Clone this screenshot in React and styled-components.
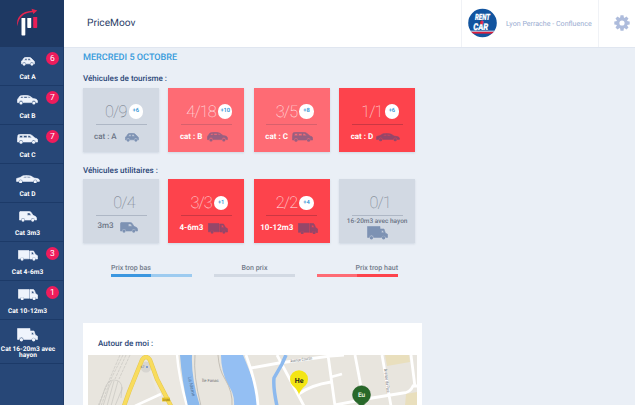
import React from "react";
import styled, { createGlobalStyle } from "styled-components";

const Global = createGlobalStyle`
  *{box-sizing:border-box}
  html,body{margin:0;padding:0;overflow:hidden}
  body{font-family:Roboto,"Liberation Sans",sans-serif;color:#2b4778;background:#eaeff7;text-rendering:geometricPrecision}
`;

const Page = styled.div`
  display:grid;grid-template-columns:64px 1fr;width:635px;height:405px;overflow:hidden;
  background:#eaeff6;
`;
const Sidebar = styled.nav`
  background:#274777;color:#fff;height:405px;box-shadow:inset -1px 0 0 #203c68;
`;
const Logo = styled.div`
  height:47px;background:#1e3963;
  svg{display:block}
`;
const NavItem = styled.div`
  position:relative;
  height:${p => (p.$tall ? 44 : 39)}px;border-bottom:1px solid #1c3a68;
`;
const NavIcon = styled.div`
  height:${p => (p.$tall ? 21.5 : 19)}px;display:flex;align-items:flex-end;justify-content:center;
  padding-right:9px;
`;
const NavLabel = styled.div`
  font-size:6.6px;line-height:7px;font-weight:700;text-align:center;
  padding-right:9px;margin-top:8px;
  ${p => p.$tall && "margin-top:4px;line-height:6.5px;padding-right:8px;white-space:pre;"}
`;
const NavBadge = styled.span`
  position:absolute;top:5px;right:5px;width:13px;height:13px;border-radius:50%;
  background:#ee1c5c;color:#fff;font-size:8.5px;line-height:14px;text-align:center;
`;

const Content = styled.div`min-width:0;`;
const Header = styled.header`
  height:48px;background:#fff;display:flex;align-items:stretch;border-bottom:1px solid #e0e6f0;
`;
const Brand = styled.div`flex:1;padding-left:23px;font-size:10.2px;line-height:48px;color:#2c4068;`;
const Agency = styled.div`
  width:138px;border-left:1px solid #f0f2f6;border-right:1px solid #f0f2f6;
  display:flex;align-items:center;padding:0 0 1px 6px;gap:9px;
  font-size:7.1px;color:#98abd0;white-space:nowrap;
`;
const AgencyName = styled.span`padding-top:1px;`;
const Settings = styled.div`width:36px;padding:15px 0 0 15px;svg{display:block}`;

const Main = styled.main`padding-left:19px;`;
const DateTitle = styled.h1`margin:0;padding-top:4px;font-size:9.1px;line-height:12px;font-weight:500;color:#369bdc;white-space:nowrap;`;
const Heading = styled.h2`margin:0;font-size:8.05px;line-height:10px;font-weight:500;color:#2b4778;height:${p => p.$h}px;padding-top:${p => p.$top}px;`;
const Cards = styled.div`display:grid;grid-template-columns:repeat(4,76px);column-gap:9.4px;`;

const tones = {
  neutral: { bg: "#d2d9e3", fg: "#6a7383", num: "#6f7783", line: "#aeb7c5", icon: "#7d92b3" },
  high: { bg: "#fe6b74", fg: "#fff", num: "#fff0f1", line: "#d8606c", icon: "#995f80" },
  top: { bg: "#fd434c", fg: "#fff", num: "#ffe9ea", line: "#cb3743", icon: "#954769" },
};
const CardBox = styled.article`
  height:64px;background:${p => p.$tone.bg};color:${p => p.$tone.fg};
  box-shadow:0 1px 2px rgba(90,110,140,.18);padding-top:15px;
`;
const Score = styled.div`
  height:17px;display:flex;justify-content:center;align-items:flex-start;padding-left:6px;gap:2px;
  color:${p => p.$tone.num};font-size:16.3px;line-height:17px;font-weight:100;letter-spacing:-.85px;
`;
const Extra = styled.span`
  width:14.5px;height:14.5px;margin-top:1.5px;border-radius:50%;background:#fff;color:#2b91d4;
  font-size:5.8px;line-height:14.5px;font-weight:500;letter-spacing:-.1px;text-align:center;
`;
const Rule = styled.div`height:1px;width:51px;margin:4px auto 0;background:${p => p.$tone.line};`;
const Caption = styled.div`
  display:flex;align-items:flex-end;padding-left:${p => p.$start}px;gap:${p => p.$gap}px;
  height:${p => p.$h || 17}px;white-space:nowrap;
  font-size:8px;font-weight:${p => (p.$bold ? 700 : 500)};line-height:10px;
`;
const CaptionText = styled.span`padding-bottom:${p => p.$lift}px;`;
const LongCaption = styled.div`
  display:flex;flex-direction:column;align-items:center;padding-top:1px;
  font-size:6.5px;line-height:9px;font-weight:500;white-space:nowrap;
`;

const Legend = styled.div`display:flex;padding:19.5px 0 0 28px;gap:22px;height:80px;`;
const LegendItem = styled.div`
  width:81px;font-size:7.05px;line-height:9px;font-weight:500;color:#737c8b;
  text-align:${p => p.$align};
`;
const Scale = styled.div`height:3px;margin-top:2px;background:linear-gradient(90deg,${p => p.$a} 50%,${p => p.$b} 50%);`;
const MapPanel = styled.section`width:339px;height:82px;background:#fff;padding:0 5px;`;
const MapTitle = styled.h2`margin:0;padding:14.5px 0 0 10px;height:31.5px;font-size:8.1px;line-height:10px;font-weight:500;`;

const vehicles = {
  A: { w: 14, h: 9, d: "M1 4L3 1Q4 .3 5 .3H8Q9 .3 10 1L12 3Q13.8 3.5 13.7 6.8H12.6A1.7 1.7 0 0 0 9.2 6.8H4.8A1.7 1.7 0 0 0 1.4 6.8H.3L.5 4ZM3.2 3.2H6V1.5H4.6ZM6.9 3.2H9.8L8.6 1.5H6.9Z", wheels: [3.1, 10.9], y: 7.3, r: 1.35 },
  B: { w: 21, h: 10, d: "M.8 4L3 1Q5 .3 8 .3Q11 .3 13 1.3L16 3.5Q20.5 3.8 20.5 6V7.6H18.8A2 2 0 0 0 14.8 7.6H6A2 2 0 0 0 2 7.6H.4V5ZM3.1 3.1H6V1.5H4.6ZM6.8 3.1H10.3V1.4H6.8ZM11.2 3.1H13.7L12 1.6H11.2Z", wheels: [4, 16.8], y: 8, r: 1.55 },
  C: { w: 21, h: 10, d: "M1 1Q2 .3 4 .3H11Q13.5 .3 15 1.4L18 4Q20.7 4.7 20.7 6V8H18.6A2 2 0 0 0 14.6 8H6A2 2 0 0 0 2 8H.4V5ZM2.3 3.7H5.6V1.6H2.7ZM6.5 3.7H10V1.6H6.5ZM10.9 3.7H14.7L13 1.8 10.9 1.6Z", wheels: [4, 16.6], y: 8.2, r: 1.55 },
  D: { w: 24, h: 8.5, d: "M.6 3.5L4 2.6 7 .8Q12 -.1 15 1.1L18 3Q23.4 3.5 23.4 5V6.4H21.2A2 2 0 0 0 17.2 6.4H6.6A2 2 0 0 0 2.6 6.4H.5ZM6.9 2.7H10.5V1.4Q8.2 1.4 6.9 2.7ZM11.4 2.7H15.1L13.6 1.7 11.4 1.4Z", wheels: [4.6, 19.2], y: 6.7, r: 1.6 },
  van: { w: 18, h: 11, d: "M1 .5H10Q11.3 .5 12 1.2L14 4.3Q17.6 5.5 17.6 7V9H15.7A2 2 0 0 0 11.7 9H6A2 2 0 0 0 2 9H.4V1.2ZM8.3 4.2H12.3L10.7 1.9H8.3Z", wheels: [4, 13.7], y: 9.1, r: 1.55 },
  truckS: { w: 20, h: 11, d: "M.3 .5H11V8.8H6A2 2 0 0 0 2.2 8.8H.3ZM11.8 1H15.5L17.3 4.3 19.6 5.8V9H17.8A2 2 0 0 0 14 9H11.8ZM13.4 4.4H16.1L14.8 2.1H13.4Z", wheels: [4.1, 15.9], y: 9.1, r: 1.55 },
  truckM: { w: 20, h: 11.5, d: "M.3 .5H11.1V9.3H6.1A2 2 0 0 0 2.3 9.3H.3ZM11.9 .5H15.5Q16.5 .8 17.5 4.5L19.7 6V9.5H18A2 2 0 0 0 14.2 9.5H11.9ZM13.7 4.5H16.4L15 2.1H13.7Z", wheels: [4.2, 16.1], y: 9.6, r: 1.55 },
  truckL: { w: 21, h: 14, d: "M.5 .5H13V3H17L18.3 7 20.6 8.3V11.4H18.8A2.2 2.2 0 0 0 14.5 11.4H6.6A2.2 2.2 0 0 0 2.2 11.4H.5ZM14.6 6.7H16.9L16.1 4.6H14.6Z", wheels: [4.4, 16.6], y: 11.7, r: 1.7 },
};
function Vehicle({ kind, color = "#eff4fc" }) {
  const v = vehicles[kind];
  return (
    <svg width={v.w} height={v.h} viewBox={`0 0 ${v.w} ${v.h}`} fill={color}>
      <path fillRule="evenodd" d={v.d} stroke={color} strokeWidth=".6" />
      {v.wheels.map(x => <circle key={x} cx={x} cy={v.y} r={v.r} />)}
    </svg>
  );
}

const nav = [
  { label: "Cat A", kind: "A", count: 6 },
  { label: "Cat B", kind: "B", count: 7 },
  { label: "Cat C", kind: "C", count: 7 },
  { label: "Cat D", kind: "D" },
  { label: "Cat 3m3", kind: "van" },
  { label: "Cat 4-6m3", kind: "truckS", count: 3 },
  { label: "Cat 10-12m3", kind: "truckM", count: 1 },
  { label: "Cat 16-20m3 avec\nhayon", kind: "truckL", tall: true },
];
const tourism = [
  { score: "0/9", extra: "+6", tone: "neutral", label: "cat : A", kind: "A", start: 11, gap: 8 },
  { score: "4/18", extra: "+10", tone: "high", label: "cat : B", kind: "B", start: 11.5, gap: 5 },
  { score: "3/5", extra: "+8", tone: "high", label: "cat : C", kind: "C", start: 11.5, gap: 4 },
  { score: "1/1", extra: "+6", tone: "top", label: "cat : D", kind: "D", start: 11.5, gap: 3 },
];
const utility = [
  { score: "0/4", tone: "neutral", label: "3m3", kind: "van", start: 14.5, gap: 6.5, lift: 2, h: 17 },
  { score: "3/3", extra: "+1", tone: "top", label: "4-6m3", kind: "truckS", start: 11, gap: 5, lift: 1, h: 18 },
  { score: "2/2", extra: "+4", tone: "top", label: "10-12m3", kind: "truckM", start: 6.5, gap: 5, lift: 1, h: 18 },
  { score: "0/1", tone: "neutral", label: "16-20m3 avec hayon", kind: "truckL", long: true },
];

function Card({ item }) {
  const t = tones[item.tone];
  return (
    <CardBox $tone={t}>
      <Score $tone={t}>{item.score}{item.extra && <Extra>{item.extra}</Extra>}</Score>
      <Rule $tone={t} />
      {item.long ? (
        <LongCaption>{item.label}<Vehicle kind={item.kind} color={t.icon} /></LongCaption>
      ) : (
        <Caption $start={item.start} $gap={item.gap} $h={item.h} $bold={item.tone !== "neutral"}>
          <CaptionText $lift={item.lift ?? 0}>{item.label}</CaptionText>
          <Vehicle kind={item.kind} color={t.icon} />
        </Caption>
      )}
    </CardBox>
  );
}

function BrandMark() {
  return (
    <svg width="64" height="47" viewBox="0 0 64 47">
      <path d="M21.5 18H25.3V34.8Q25.3 35.5 24.6 35.5H22.2Q21.5 35.5 21.5 34.8Z M27.3 18H31.2V27.3Q31.2 28 30.5 28H28Q27.3 28 27.3 27.3Z" fill="#fff" />
      <path d="M33.2 17H37.2V27.3Q37.2 28 36.5 28H33.9Q33.2 28 33.2 27.3Z" fill="#e91e57" />
      <path d="M17.6 26.3C15.2 17.5 22 11.1 32.2 10.7L31.5 8.8 37.3 10.6 33.3 14 32.8 12.3C23.8 12.3 18.2 17.4 17.6 26.3Z" fill="#e4234f" />
    </svg>
  );
}
function RentLogo() {
  return (
    <svg width="29" height="30" viewBox="0 0 29 30">
      <defs><clipPath id="disc"><circle cx="14.5" cy="15" r="14.3" /></clipPath></defs>
      <g clipPath="url(#disc)">
        <rect width="29" height="30" fill="#12549f" />
        <rect y="22.7" width="29" height="1.1" fill="#dce7f5" />
        <rect y="23.8" width="29" height="1.8" fill="#df1f3c" />
      </g>
      <g fontFamily="Roboto" fontWeight="900" fontStyle="italic" fill="#fff" stroke="#fff" strokeWidth=".2">
        <text x="7" y="12.3" fontSize="8.5" textLength="15" lengthAdjust="spacingAndGlyphs">RENT</text>
        <text x="5.2" y="22" fontSize="9.3" textLength="15" lengthAdjust="spacingAndGlyphs">CAR</text>
      </g>
      <text x="12" y="15.5" fontFamily="Roboto" fontWeight="900" fontStyle="italic" fontSize="6" fill="#e9283e" stroke="#e9283e" strokeWidth=".3">a</text>
    </svg>
  );
}
function Gear() {
  return (
    <svg width="16" height="16" viewBox="-8 -8 16 16" fill="#aebcdc">
      {[0, 45, 90, 135, 180, 225, 270, 315].map(a => (
        <path key={a} transform={`rotate(${a})`} d="M-2 -4.5L-1.5 -7.7H1.5L2 -4.5Z" />
      ))}
      <path fillRule="evenodd" d="M0 -5.8A5.8 5.8 0 1 0 0 5.8A5.8 5.8 0 1 0 0 -5.8ZM0 -2.6A2.6 2.6 0 1 1 0 2.6A2.6 2.6 0 1 1 0 -2.6Z" />
    </svg>
  );
}

function CityMap() {
  return (
    <svg width="329" height="51" viewBox="88 354 329 51" display="block">
      <rect x="88" y="354" width="329" height="51" fill="#e8e5de" />
      <path d="M143 354L175 354 190 405H162Z" fill="#eeebe5" opacity=".5" />
      <g fill="none" stroke="#c3c1bc" strokeWidth=".6">
        <path d="M120 354L98 405M123 354L110 380 101 405M126 354L115 378M130 354L119 378" strokeDasharray="3 1" />
        <path d="M99 405L105 387Q108 379 114 379Q122 379 122 388L115 405M103 405L109 386 112 380M107 405L114 380M111 405L118 380M122 386L121 397" />
      </g>
      <circle cx="146" cy="366" r="5.5" fill="#d7d5d0" />
      <path d="M135 405L161 393" stroke="#fff" strokeWidth="2.5" />
      <path d="M124 405L129 391 142 359Q146 353 150 359L157 378 171 405" fill="none" stroke="#e5c750" strokeWidth="4.4" />
      <path d="M124 405L129 391 142 359Q146 353 150 359L157 378 171 405" fill="none" stroke="#f8dc5d" strokeWidth="3.4" />
      <path d="M177 354Q179 377 187 405" fill="none" stroke="#fff" strokeWidth="2.5" />
      <path d="M180 354H192Q191 377 200 405H188Q182 381 180 354Z" fill="#8bb9ed" />
      <path d="M195 354Q193 374 201 405" fill="none" stroke="#b8b6b1" strokeWidth=".8" />
      <path d="M221 354H243Q251 373 253 380Q258 392 257 405H234Q235 393 228 384Q221 370 221 354Z" fill="#94bff3" />
      <path d="M218 354Q219 369 225 378Q233 391 232 405" fill="none" stroke="#c5c0b7" strokeWidth="1" />
      <g fill="none" stroke="#fff" strokeWidth="2.8">
        <path d="M246 354Q257 384 258 405M251 367L279 362 330 355 344 354M277 354L304 405M328 354L335 405M355 354L362 391M382 354L391 405M411 354L415 386M299 393Q311 384 331 381M331 376L342 373M335 404L372 397 403 392Q410 392 413 385H417" />
      </g>
      <path d="M286 354L282 363 274 377Q273 387 277 405" fill="none" stroke="#8cb9ee" strokeWidth="3.5" />
      <path d="M385 354H409L410 361 387 365Z M406 393L417 391V405H405Z" fill="#e9dfbd" />
      <rect x="162" y="396.5" width="8" height="4" rx=".6" fill="#e9c72e" />
      <g fontFamily="Roboto" fill="#6e7075">
        <text x="140.5" y="367.3" fontSize="3.5">67</text>
        <text x="163" y="399.8" fontSize="3" fill="#7a6614">D986</text>
        <text x="202" y="380.7" fontSize="4.2">Île Fanac</text>
        <text transform="translate(188 376) rotate(78)" fontSize="4.8" fill="#527398">La Marne</text>
        <text transform="translate(290.5 361.5) rotate(-8)" fontSize="4.2" textLength="22" lengthAdjust="spacingAndGlyphs">Avenue Courtin</text>
        <text transform="translate(384 368) rotate(83)" fontSize="4.3" textLength="24" lengthAdjust="spacingAndGlyphs">Avenue du Parc</text>
      </g>
      <circle cx="147" cy="366" r="1" fill="#668bd1" />
      <path d="M299 394Q298 389 292.5 384.5A9 9 0 1 1 305.5 384.5Q300 389 299 394Z" fill="#f3e514" />
      <text x="299.1" y="381.7" textAnchor="middle" fontFamily="Roboto" fontSize="7" fontWeight="700" fill="#252817">He</text>
      <path d="M361.5 409Q361 404 355 400A9 9 0 1 1 368 400Q362 404 361.5 409Z" fill="#286829" stroke="#1d571f" strokeWidth=".5" />
      <text x="361.5" y="396.3" textAnchor="middle" fontFamily="Roboto" fontSize="6.5" fontWeight="700" fill="#e5efdf">Eu</text>
    </svg>
  );
}

export default function App() {
  return (
    <>
      <Global />
      <Page>
        <Sidebar>
          <Logo><BrandMark /></Logo>
          {nav.map(n => (
            <NavItem key={n.label} $tall={n.tall}>
              <NavIcon $tall={n.tall}><Vehicle kind={n.kind} /></NavIcon>
              <NavLabel $tall={n.tall}>{n.label}</NavLabel>
              {n.count && <NavBadge>{n.count}</NavBadge>}
            </NavItem>
          ))}
        </Sidebar>
        <Content>
          <Header>
            <Brand>PriceMoov</Brand>
            <Agency><RentLogo /><AgencyName>Lyon Perrache - Confluence</AgencyName></Agency>
            <Settings><Gear /></Settings>
          </Header>
          <Main>
            <DateTitle>MERCREDI 5 OCTOBRE</DateTitle>
            <Heading $h={23.5} $top={9.5}>Véhicules de tourisme :</Heading>
            <Cards>{tourism.map(c => <Card key={c.label} item={c} />)}</Cards>
            <Heading $h={27.5} $top={14}>Véhicules utilitaires :</Heading>
            <Cards>{utility.map(c => <Card key={c.label} item={c} />)}</Cards>
            <Legend>
              <LegendItem $align="left">Prix trop bas<Scale $a="#3c97e0" $b="#9dcbf0" /></LegendItem>
              <LegendItem $align="center">Bon prix<Scale $a="#d2d9e3" $b="#d2d9e3" /></LegendItem>
              <LegendItem $align="right">Prix trop haut<Scale $a="#fe6b74" $b="#fd434c" /></LegendItem>
            </Legend>
            <MapPanel>
              <MapTitle>Autour de moi :</MapTitle>
              <CityMap />
            </MapPanel>
          </Main>
        </Content>
      </Page>
    </>
  );
}
